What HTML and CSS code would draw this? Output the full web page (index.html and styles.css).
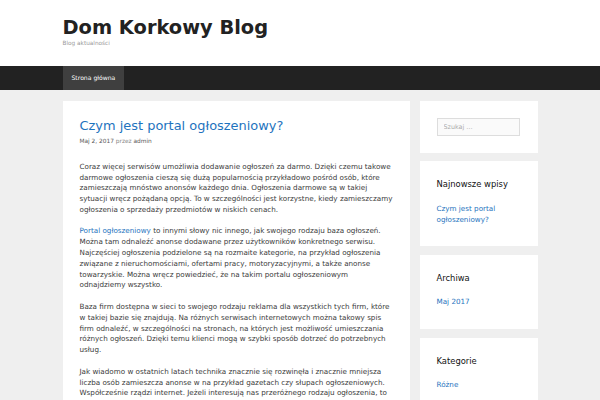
FILE: index.html
```html
<!DOCTYPE html>
<html lang="pl">
<head>
    <meta charset="UTF-8">
    <meta name="viewport" content="width=device-width, initial-scale=1.0">
    <title>Dom Korkowy Blog</title>
    <link rel="stylesheet" href="styles.css">
</head>
<body>
    <header class="site-header">
        <div class="inside-header">
            <p class="site-title"><a href="#">Dom Korkowy Blog</a></p>
            <p class="site-description">Blog aktualności</p>
        </div>
    </header>

    <nav class="main-nav">
        <ul class="menu">
            <li class="current"><a href="#">Strona główna</a></li>
        </ul>
    </nav>

    <div class="site-content">
        <main class="content-area">
            <article class="post">
                <header class="entry-header">
                    <h2 class="entry-title"><a href="#">Czym jest portal ogłoszeniowy?</a></h2>
                    <div class="entry-meta">
                        <a href="#" class="date">Maj 2, 2017</a> <span class="by">przez</span> <a href="#" class="author">admin</a>
                    </div>
                </header>
                <div class="entry-content">
                    <p>Coraz więcej serwisów umożliwia dodawanie ogłoszeń za darmo. Dzięki czemu takowe darmowe ogłoszenia cieszą się dużą popularnością przykładowo pośród osób, które zamieszczają mnóstwo anonsów każdego dnia. Ogłoszenia darmowe są w takiej sytuacji wręcz pożądaną opcją. To w szczególności jest korzystne, kiedy zamieszczamy ogłoszenia o sprzedaży przedmiotów w niskich cenach.</p>
                    <p><a href="#">Portal ogłoszeniowy</a> to innymi słowy nic innego, jak swojego rodzaju baza ogłoszeń. Można tam odnaleźć anonse dodawane przez użytkowników konkretnego serwisu. Najczęściej ogłoszenia podzielone są na rozmaite kategorie, na przykład ogłoszenia związane z nieruchomościami, ofertami pracy, motoryzacyjnymi, a także anonse towarzyskie. Można wręcz powiedzieć, że na takim portalu ogłoszeniowym odnajdziemy wszystko.</p>
                    <p>Baza firm dostępna w sieci to swojego rodzaju reklama dla wszystkich tych firm, które w takiej bazie się znajdują. Na różnych serwisach internetowych można takowy spis firm odnaleźć, w szczególności na stronach, na których jest możliwość umieszczania różnych ogłoszeń. Dzięki temu klienci mogą w szybki sposób dotrzeć do potrzebnych usług.</p>
                    <p>Jak wiadomo w ostatnich latach technika znacznie się rozwinęła i znacznie mniejsza liczba osób zamieszcza anonse w na przykład gazetach czy słupach ogłoszeniowych. Współcześnie rządzi internet. Jeżeli interesują nas przeróżnego rodzaju ogłoszenia, to najprościej poszukać ich właśnie w sieci.</p>
                </div>
            </article>
        </main>

        <aside class="sidebar">
            <section class="widget">
                <form class="search-form">
                    <input type="search" class="search-field" placeholder="Szukaj …">
                </form>
            </section>
            <section class="widget">
                <h2 class="widget-title">Najnowsze wpisy</h2>
                <ul>
                    <li><a href="#">Czym jest portal ogłoszeniowy?</a></li>
                </ul>
            </section>
            <section class="widget">
                <h2 class="widget-title">Archiwa</h2>
                <ul>
                    <li><a href="#">Maj 2017</a></li>
                </ul>
            </section>
            <section class="widget">
                <h2 class="widget-title">Kategorie</h2>
                <ul>
                    <li><a href="#">Różne</a></li>
                </ul>
            </section>
        </aside>
    </div>
</body>
</html>
```

FILE: styles.css
```css
body {
    margin: 0;
    background-color: #efefef;
    color: #3a3a3a;
    font-family: "DejaVu Sans", Verdana, sans-serif;
    font-size: 7.2px;
    line-height: 1.5;
}

a {
    color: #1e73be;
    text-decoration: none;
}

p {
    margin: 0 0 1.5em;
}

/* header */
.site-header {
    background-color: #fff;
}

.inside-header {
    width: 475px;
    margin: 0 auto;
    padding: 16px 0 18px;
}

.site-title {
    margin: 0;
    font-size: 19.4px;
    font-weight: bold;
    line-height: 1.2;
}

.site-title a {
    color: #222;
}

.site-description {
    margin: 0;
    font-size: 5.75px;
    color: #999;
}

/* navigation */
.main-nav {
    background-color: #222;
}

.menu {
    width: 475px;
    margin: 0 auto;
    padding: 0;
    list-style: none;
    display: flex;
}

.menu a {
    display: block;
    padding: 0 9px;
    line-height: 24px;
    font-size: 6.1px;
    color: #fff;
}

.menu .current a {
    background-color: #3f3f3f;
}

/* content */
.site-content {
    width: 475px;
    margin: 11px auto 0;
    display: flex;
    gap: 10px;
    align-items: flex-start;
}

.content-area {
    width: 347px;
    flex-shrink: 0;
}

.post {
    background-color: #fff;
    padding: 17px;
}

.entry-title {
    margin: 0;
    font-size: 12.95px;
    font-weight: normal;
    line-height: 1.2;
}

.entry-meta {
    margin-top: 4px;
    font-size: 5.85px;
    color: #888;
}

.entry-meta a {
    color: #595959;
}

.entry-content {
    margin-top: 15.5px;
}

/* sidebar */
.sidebar {
    width: 118px;
    flex-shrink: 0;
}

.widget {
    background-color: #fff;
    padding: 17px;
    margin-bottom: 8.5px;
}

.widget-title {
    margin: 0 0 12px;
    font-size: 8.4px;
    font-weight: normal;
    line-height: 1.6;
    color: #111;
}

.widget ul {
    margin: 0;
    padding: 0 0 4px;
    list-style: none;
}

.search-form {
    margin: 0;
}

.search-field {
    box-sizing: border-box;
    display: block;
    width: 83px;
    height: 18px;
    padding: 0 6px;
    border: 1px solid #ddd;
    background-color: #fafafa;
    font-family: inherit;
    font-size: 6.4px;
    color: #666;
}

.search-field::placeholder {
    color: #aaa;
}
```
